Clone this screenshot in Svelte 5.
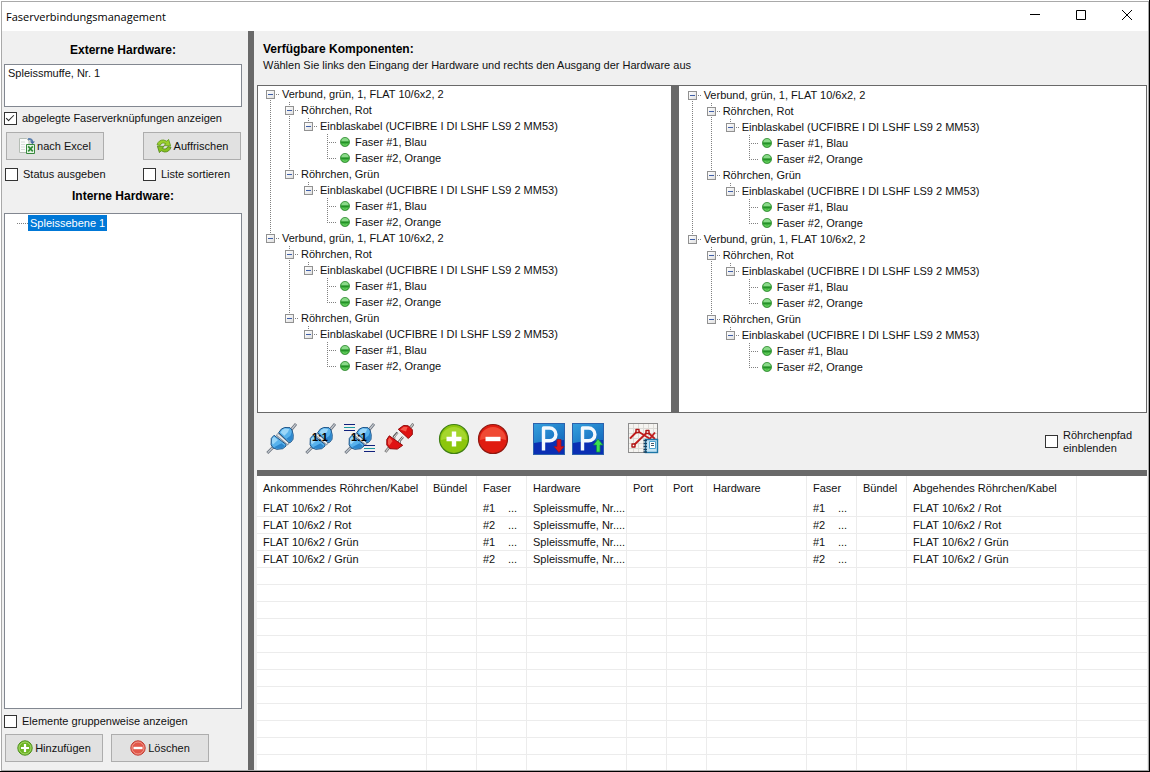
<script>
	const fiberCable = {
		label: 'Einblaskabel (UCFIBRE I DI LSHF LS9 2 MM53)',
		children: [{ label: 'Faser #1, Blau' }, { label: 'Faser #2, Orange' }]
	};

	function bundle() {
		return {
			label: 'Verbund, grün, 1, FLAT 10/6x2, 2',
			children: [
				{ label: 'Röhrchen, Rot', children: [fiberCable] },
				{ label: 'Röhrchen, Grün', children: [fiberCable] }
			]
		};
	}

	const components = [bundle(), bundle()];

	const columns = [
		{ label: 'Ankommendes Röhrchen/Kabel', width: 170 },
		{ label: 'Bündel', width: 50 },
		{ label: 'Faser', width: 50 },
		{ label: 'Hardware', width: 100 },
		{ label: 'Port', width: 40 },
		{ label: 'Port', width: 40 },
		{ label: 'Hardware', width: 100 },
		{ label: 'Faser', width: 50 },
		{ label: 'Bündel', width: 50 },
		{ label: 'Abgehendes Röhrchen/Kabel', width: 170 }
	];

	const rows = [
		{ cable: 'FLAT 10/6x2 / Rot', fiber: '#1' },
		{ cable: 'FLAT 10/6x2 / Rot', fiber: '#2' },
		{ cable: 'FLAT 10/6x2 / Grün', fiber: '#1' },
		{ cable: 'FLAT 10/6x2 / Grün', fiber: '#2' }
	];
	const emptyRows = Array(12);

	let showStored = $state(true);
	let printStatus = $state(false);
	let sortList = $state(false);
	let grouped = $state(false);
	let showPath = $state(false);
</script>

{#snippet tree(nodes)}
	<ul>
		{#each nodes as node}
			<li>
				<div class="node">
					{#if node.children}
						<button class="toggle" aria-label="Knoten zuklappen"></button>
						<span class="dots short"></span>
					{:else}
						<span class="dots"></span>
						<svg class="ball" width="10" height="10" viewBox="0 0 10 10">
							<circle cx="5" cy="5" r="4.6" fill="#3fae3f" stroke="#3a8f3a" stroke-width=".8" />
							<path d="M1.4 4.6a3.6 3.6 0 0 1 7.2 0z" fill="#8bd98a" />
							<path d="M1.2 5.2h7.6" stroke="#1d8a22" stroke-width="1.2" />
							<path d="M2.6 7.4q2.4 1.8 4.8 0" stroke="#6fd765" fill="none" />
						</svg>
					{/if}
					<span>{node.label}</span>
				</div>
				{#if node.children}
					{@render tree(node.children)}
				{/if}
			</li>
		{/each}
	</ul>
{/snippet}

{#snippet bluePlug()}
	<path d="M31 1l-5 6M2.3 30l6-6" stroke="#6f7680" stroke-width="2.8" />
	<path d="M30.6 1.4l-5 6M2.700 29.600l6-6" stroke="#c9ced4" stroke-width="1.2" />
	<path d="M12 11l12 10" stroke="#8d969f" stroke-width="4" />
	<path d="M12.500 11.500l10.500 9" stroke="#eef2f5" stroke-width="1.600" />
	<path d="M13.700 9.700l2.600-3.600 3.400-1.600 5.300.2 2 2.300 1.200 4.700-.2 4.600-2.300 3h-2z" fill="#58b2ec" stroke="#1b5287" />
	<path d="M15.600 9.400l1.800-2.600 2.800-1.200 4 .4-1.200 3-3.600 3.800z" fill="#9bd6f8" />
	<path d="M27 8.500l.6 3.500-.2 4-1.800 2.400h-1.200l-3-2.600 4-3z" fill="#2c86cd" />
	<path d="M9 12.300L6.300 15.400l-.2 6.300 1.800 3 3.800 1.600 6-.6 3.300-2.700v-1.600z" fill="#58b2ec" stroke="#1b5287" />
	<path d="M9 13.800l-2 2.200v4l1 1.500 5-4.500z" fill="#9bd6f8" />
	<path d="M9 24.200l3 1.300 5.400-.5 2.500-2-3.400-2.800z" fill="#2c86cd" />
{/snippet}

{#snippet parking()}
	<defs>
		<linearGradient id="sky" x1="0" y1="0" x2="1" y2="1">
			<stop offset="0" stop-color="#35a0dd" />
			<stop offset="1" stop-color="#1268bd" />
		</linearGradient>
	</defs>
	<rect x=".5" y=".5" width="31" height="31" fill="#0a2fb4" stroke="#2c62ad" />
	<path d="M1 1h30v16q-15 0-30 3z" fill="url(#sky)" />
	<path d="M10.500 27.500V5h6a6.400 6.400 0 0 1 0 12.800h-6" fill="none" stroke="#f4f9fd" stroke-width="3.400" />
{/snippet}

<div class="screen">
	<div class="window">
		<header>
			<h1>Faserverbindungsmanagement</h1>
			<button aria-label="Minimieren">
				<svg width="12" height="12" viewBox="0 0 12 12"><path d="M1 5.500h10" /></svg>
			</button>
			<button aria-label="Maximieren">
				<svg width="12" height="12" viewBox="0 0 12 12"><path d="M1.500 1.500h9v9h-9z" /></svg>
			</button>
			<button aria-label="Schließen">
				<svg width="12" height="12" viewBox="0 0 12 12"><path d="M1 1l10 10M11 1L1 11" /></svg>
			</button>
		</header>

		<main>
			<aside>
				<h2>Externe Hardware:</h2>
				<div class="box external">Spleissmuffe, Nr. 1</div>
				<label class="stored"><input type="checkbox" bind:checked={showStored} />abgelegte Faserverknüpfungen anzeigen</label>
				<div class="pair">
					<button class="push">
						<svg width="16" height="16" viewBox="0 0 16 16">
							<path d="M.5.500h7l2.500 2.500v11.500h-9.500z" fill="#fafbfa" stroke="#b5bdb5" />
							<path d="M2 4h4M2 6.500h4M2 9h4M2 11.500h4" stroke="#d5dcd8" />
							<path d="M9 1.200q4-.6 4.400 2.800" fill="none" stroke="#5b7fae" stroke-width="2" />
							<path d="M11 3.600h5l-2.600 2.600z" fill="#44699c" />
							<path d="M7.500 6.500h8v9h-8z" fill="#e6f3e6" stroke="#37893c" />
							<path d="M9.200 8.400l4.600 5M13.800 8.400l-4.600 5" stroke="#2e8b34" stroke-width="1.600" />
						</svg>
						nach Excel
					</button>
					<button class="push">
						<svg width="16" height="16" viewBox="0 0 16 16">
							<path d="M1 6.800Q2.600 1.800 7.600 2l3.200 1.200L12.600 1.400l2 6.400-6.600-.2L9.800 5.600Q5.400 3.800 4.200 7.400z" fill="#9bd02e" stroke="#5d9416" stroke-width=".8" />
							<path d="M15 9.200q-1.600 5-6.600 4.800l-3.200-1.200-1.800 1.800-2-6.400 6.600.2-1.800 2q4.400 1.800 5.600-1.800z" fill="#86c222" stroke="#4f8412" stroke-width=".8" />
						</svg>
						Auffrischen
					</button>
				</div>
				<div class="pair checks">
					<label><input type="checkbox" bind:checked={printStatus} />Status ausgeben</label>
					<label><input type="checkbox" bind:checked={sortList} />Liste sortieren</label>
				</div>
				<h2 class="internal">Interne Hardware:</h2>
				<div class="box levels">
					<span class="dots"></span>
					<span class="selected">Spleissebene 1</span>
				</div>
				<label class="group"><input type="checkbox" bind:checked={grouped} />Elemente gruppenweise anzeigen</label>
				<div class="actions">
					<button class="push">
						<svg width="16" height="16" viewBox="0 0 16 16">
							<circle cx="8" cy="8" r="7.200" fill="#6fb526" stroke="#4c8f1b" />
							<circle cx="8" cy="8" r="6" fill="none" stroke="#a5d86a" />
							<path d="M8 4v8M4 8h8" stroke="#fff" stroke-width="2.200" />
						</svg>
						Hinzufügen
					</button>
					<button class="push">
						<svg width="16" height="16" viewBox="0 0 16 16">
							<circle cx="8" cy="8" r="7.200" fill="#e2574a" stroke="#c23c33" />
							<circle cx="8" cy="8" r="6" fill="none" stroke="#f19a8c" />
							<path d="M3.500 8h9" stroke="#fff" stroke-width="2.400" />
						</svg>
						Löschen
					</button>
				</div>
			</aside>

			<section class="content">
				<div class="intro">
					<h2>Verfügbare Komponenten:</h2>
					<p>Wählen Sie links den Eingang der Hardware und rechts den Ausgang der Hardware aus</p>
				</div>

				<div class="trees">
					<div class="tree input">{@render tree(components)}</div>
					<div class="tree output">{@render tree(components)}</div>
				</div>

				<div class="toolbar">
					<div class="tools">
						<button aria-label="Verbinden">
							<svg viewBox="0 0 32 32">{@render bluePlug()}</svg>
						</button>
						<button aria-label="1:1 verbinden">
							<svg viewBox="0 0 32 32">
								{@render bluePlug()}
								<text x="8" y="18">1:1</text>
							</svg>
						</button>
						<button aria-label="Alle 1:1 verbinden">
							<svg viewBox="0 0 32 32">
								{@render bluePlug()}
								<path d="M1 1.500h11M21 22.500h11M1 7.500h11M21 28.500h11" stroke="#10207c" />
								<path d="M1 4.500h11M21 25.500h11" stroke="#1d9aa0" />
								<text x="8" y="18">1:1</text>
							</svg>
						</button>
						<button aria-label="Trennen">
							<svg viewBox="0 0 32 32">
								<path d="M31.400 .8l-4 5M3.400 29l4-5" stroke="#777" stroke-width="2.800" />
								<path d="M31 1.200l-3 4M3.800 28.600l3-4" stroke="#ccc" stroke-width="1.100" />
								<path d="M12 18v-4.500l3.500-4M17.500 22v-4l3.500-4" stroke="#555" stroke-width="2.400" fill="none" />
								<path d="M12 17v-3l3.500-4M17.500 21v-3l3.500-4" stroke="#e4e4e4" fill="none" />
								<path d="M16.300 6.300l5.200-3.800 4.800.3 4 4v4.700l-4 4z" fill="#e01212" stroke="#8f0a0a" />
								<path d="M18.200 6.400l3.600-2.600 3.800.2-1.600 4.400z" fill="#f4594b" />
								<path d="M7.300 12.800L4.800 16.500v5.500l3.200 3.700 7.300.4 5.400-3.800z" fill="#e01212" stroke="#8f0a0a" />
								<path d="M7.500 14.600L6 17v4l1.400 1.600 3.200-4.600z" fill="#f4594b" />
							</svg>
						</button>
					</div>
					<div class="tools">
						<button aria-label="Hinzufügen">
							<svg viewBox="0 0 32 32">
								<circle cx="16" cy="16" r="14.500" fill="#8cc60c" stroke="#3f7f14" stroke-width="1.200" />
								<path d="M3 17a13 13 0 0 1 26 0q-13-4-26 0z" fill="#a5d62c" />
								<path d="M16 8.500v15M8.500 16h15" stroke="#fff" stroke-width="4.400" />
							</svg>
						</button>
						<button aria-label="Entfernen">
							<svg viewBox="0 0 32 32">
								<circle cx="16" cy="16" r="14.500" fill="#e01c10" stroke="#8f1810" stroke-width="1.200" />
								<path d="M3 17a13 13 0 0 1 26 0q-13-4-26 0z" fill="#f04a34" />
								<path d="M8.500 16h15" stroke="#fff" stroke-width="4.400" />
							</svg>
						</button>
					</div>
					<div class="tools">
						<button aria-label="Parken">
							<svg viewBox="0 0 32 32">
								{@render parking()}
								<path d="M24 16.500h4v7h3L26 29.500l-5-6h3z" fill="#d8141c" stroke="#8d1430" stroke-width=".8" />
							</svg>
						</button>
						<button aria-label="Ausparken">
							<svg viewBox="0 0 32 32">
								{@render parking()}
								<path d="M24.500 29h3.500v-7h3L26 16l-4.500 6h3z" fill="#3de050" stroke="#128a4a" stroke-width=".8" />
							</svg>
						</button>
					</div>
					<div class="tools">
						<button aria-label="Diagramm">
							<svg viewBox="0 0 32 32">
								<rect x=".5" y=".5" width="29" height="29" fill="#f5f4f1" stroke="#8d8d8d" />
								<path d="M5.500 1v28M10.500 1v28M15.500 1v28M20.500 1v28M25.500 1v28M1 5.500h28M1 10.500h28M1 15.500h28M1 20.500h28M1 25.500h28" stroke="#dcdad6" />
								<path d="M2 15.500L9.500 8 23 16.500M5.500 22.500L19.500 9l7.500 7M22 15.500l5-6" fill="none" stroke="#c01c1c" stroke-width="1.800" />
								<path d="M8 6.500h3v3h-3zM4 21h3v3h-3zM18 7.500h3v3h-3z" fill="#fff" stroke="#b01414" stroke-width="1.400" />
								<rect x="17.500" y="16.500" width="12" height="13" fill="#c2e3f4" stroke="#1d76a6" stroke-width="1.400" />
								<path d="M15.500 17.500h3.500M15.500 20.500h3.500M15.500 23.500h3.500M15.500 26.500h3.500M15.500 29h3.500" stroke="#173f5e" stroke-width="1.500" />
								<path d="M21.500 18.500h6v7h-6z" fill="#fff" stroke="#4fa3cf" />
								<path d="M23 20.500h3M23 22.500h3" stroke="#456" />
							</svg>
						</button>
					</div>
					<label class="path"><input type="checkbox" bind:checked={showPath} /><span>Röhrchenpfad einblenden</span></label>
				</div>

				<div class="list">
					<table>
						<colgroup>
							{#each columns as column}
								<col style="width: {column.width}px" />
							{/each}
							<col />
						</colgroup>
						<thead>
							<tr>
								{#each columns as column}
									<th>{column.label}</th>
								{/each}
								<td></td>
							</tr>
						</thead>
						<tbody>
							{#each rows as row}
								<tr>
									<td>{row.cable}</td>
									<td></td>
									<td><span class="fiber">{row.fiber}</span>...</td>
									<td>Spleissmuffe, Nr....</td>
									<td></td>
									<td></td>
									<td></td>
									<td><span class="fiber">{row.fiber}</span>...</td>
									<td></td>
									<td>{row.cable}</td>
									<td></td>
								</tr>
							{/each}
							{#each emptyRows as _}
								<tr>
									{#each columns as _}
										<td></td>
									{/each}
									<td></td>
								</tr>
							{/each}
						</tbody>
					</table>
				</div>
			</section>
		</main>
	</div>
</div>

<style>
	:global(body) {
		margin: 0;
		background: #fff;
	}

	.screen {
		box-sizing: border-box;
		height: 100vh;
		padding: 1px 0 0 1px;
		border: solid #000;
		border-width: 0 1px 1px 0;
		font: 11px/16px 'Liberation Sans', Arial, sans-serif;
		color: #111;
	}

	.window {
		box-sizing: border-box;
		height: 100%;
		display: flex;
		flex-direction: column;
		border: 1px solid #a9a9a9;
		background: #f0f0f0;
	}

	h1,
	h2,
	p,
	ul {
		margin: 0;
		padding: 0;
	}

	button {
		padding: 0;
		border: 0;
		background: none;
		font: inherit;
		color: inherit;
	}

	header {
		display: flex;
		align-items: center;
		gap: 6px;
		height: 29px;
		padding-right: 1px;
		background: #fff;
	}

	h1 {
		flex: 1;
		padding-left: 4px;
		font: 11px/16px 'Open Sans', sans-serif;
		color: #000;
	}

	header button {
		display: flex;
		align-items: center;
		justify-content: center;
		width: 40px;
		height: 26px;
		margin-bottom: 3px;
	}

	header path {
		fill: none;
		stroke: #000;
	}

	main {
		flex: 1;
		display: flex;
		min-height: 0;
	}

	aside {
		box-sizing: border-box;
		width: 252px;
		display: flex;
		flex-direction: column;
		padding: 11px 6px 8px 2px;
		border-right: 6px solid #696969;
	}

	h2 {
		font-size: 12px;
		line-height: 16px;
		color: #000;
	}

	aside h2 {
		text-align: center;
	}

	.box {
		border: 1px solid #828790;
		background: #fff;
	}

	.external {
		height: 41px;
		margin-top: 6px;
		padding-left: 3px;
	}

	label {
		display: flex;
		align-items: center;
		gap: 5px;
	}

	input {
		appearance: none;
		flex: none;
		box-sizing: border-box;
		width: 13px;
		height: 13px;
		margin: 0;
		border: 1px solid #333;
		background: #fff;
	}

	input:checked::before {
		content: '';
		display: block;
		width: 7px;
		height: 3px;
		margin: 2px 0 0 1px;
		border: solid #222;
		border-width: 0 0 1px 1px;
		rotate: -45deg;
	}

	.stored {
		margin-top: 3px;
	}

	.pair {
		display: flex;
		justify-content: space-between;
		margin: 6px 1px 0 2px;
	}

	.checks {
		margin: 6px 0 0 1px;
	}

	.checks label {
		width: 99px;
		white-space: nowrap;
	}

	.push {
		box-sizing: border-box;
		display: flex;
		align-items: center;
		justify-content: center;
		gap: 2px;
		width: 98px;
		height: 28px;
		border: 1px solid #adadad;
		background: #e1e1e1;
	}

	.internal {
		margin-top: 6px;
	}

	.levels {
		flex: 1;
		display: flex;
		align-items: flex-start;
		margin-top: 9px;
		padding: 1px 0 0 12px;
	}

	.selected {
		padding: 0 2px;
		background: #0078d7;
		color: #fff;
	}

	.group {
		margin-top: 4px;
	}

	.actions {
		display: flex;
		gap: 8px;
		margin: 5px 1px 0;
	}

	.content {
		flex: 1;
		min-width: 0;
		display: flex;
		flex-direction: column;
		padding: 0 1px 0 3px;
	}

	.intro {
		padding: 10px 6px 12px;
	}

	.trees {
		display: flex;
		background: #696969;
		gap: 7px;
	}

	.tree {
		box-sizing: border-box;
		height: 328px;
		padding-left: 8px;
		border: 1px solid #696969;
		background: #fff;
		overflow: hidden;
		white-space: nowrap;
	}

	.input {
		flex: 414;
		border-right: 0;
	}

	.output {
		flex: 469;
		padding: 1px 0 0 9px;
	}

	ul {
		list-style: none;
	}

	ul ul {
		margin-left: 19px;
	}

	/* dotted connector running down to the next sibling */
	li {
		background: repeating-linear-gradient(#808080 0 1px, transparent 1px 2px) 4px 0 / 1px 100% no-repeat;
	}

	li:last-child {
		background-size: 1px 8px;
	}

	.tree > ul > li:first-child {
		background-position-y: 8px;
	}

	.node {
		display: flex;
		align-items: center;
		height: 16px;
	}

	.toggle {
		box-sizing: border-box;
		width: 9px;
		height: 9px;
		border: 1px solid #919191;
		background: linear-gradient(#3f5fa8, #3f5fa8) center / 5px 1px no-repeat, linear-gradient(135deg, #fff, #e0e0e0);
	}

	.dots {
		width: 9px;
		height: 1px;
		margin: 0 4px;
		background: repeating-linear-gradient(90deg, #808080 0 1px, transparent 1px 2px);
	}

	.dots.short {
		width: 4px;
		margin: 0 2px 0 1px;
	}

	.levels .dots {
		width: 11px;
		margin: 8px 0 0;
	}

	.ball {
		margin-right: 5px;
	}

	.toolbar {
		display: flex;
		align-items: center;
		gap: 24px;
		height: 57px;
		padding: 0 14px 0 8px;
	}

	.tools {
		display: flex;
		gap: 7px;
		margin-bottom: 5px;
	}

	.tools svg {
		display: block;
		width: 32px;
		height: 32px;
	}

	.tools path,
	.tools circle {
		stroke-linejoin: round;
	}

	text {
		font: bold 11px 'Liberation Sans', sans-serif;
		fill: #000;
	}

	.path {
		margin-left: auto;
		line-height: 13px;
	}

	.path span {
		width: 70px;
	}

	.list {
		flex: 1;
		min-height: 0;
		overflow: hidden;
		border-top: 6px solid #696969;
		background: #fff;
	}

	table {
		width: 100%;
		table-layout: fixed;
		border-collapse: separate;
		border-spacing: 0;
	}

	th,
	td {
		box-sizing: border-box;
		height: 17px;
		padding: 1px 0 0 6px;
		border-right: 1px solid #ececec;
		border-bottom: 1px solid #ececec;
		font-weight: normal;
		line-height: 15px;
		text-align: left;
		white-space: nowrap;
	}

	thead th,
	thead td {
		height: 24px;
		border-bottom: 0;
	}

	td:last-child {
		border-right: 0;
	}

	.fiber {
		display: inline-block;
		width: 25px;
	}
</style>
